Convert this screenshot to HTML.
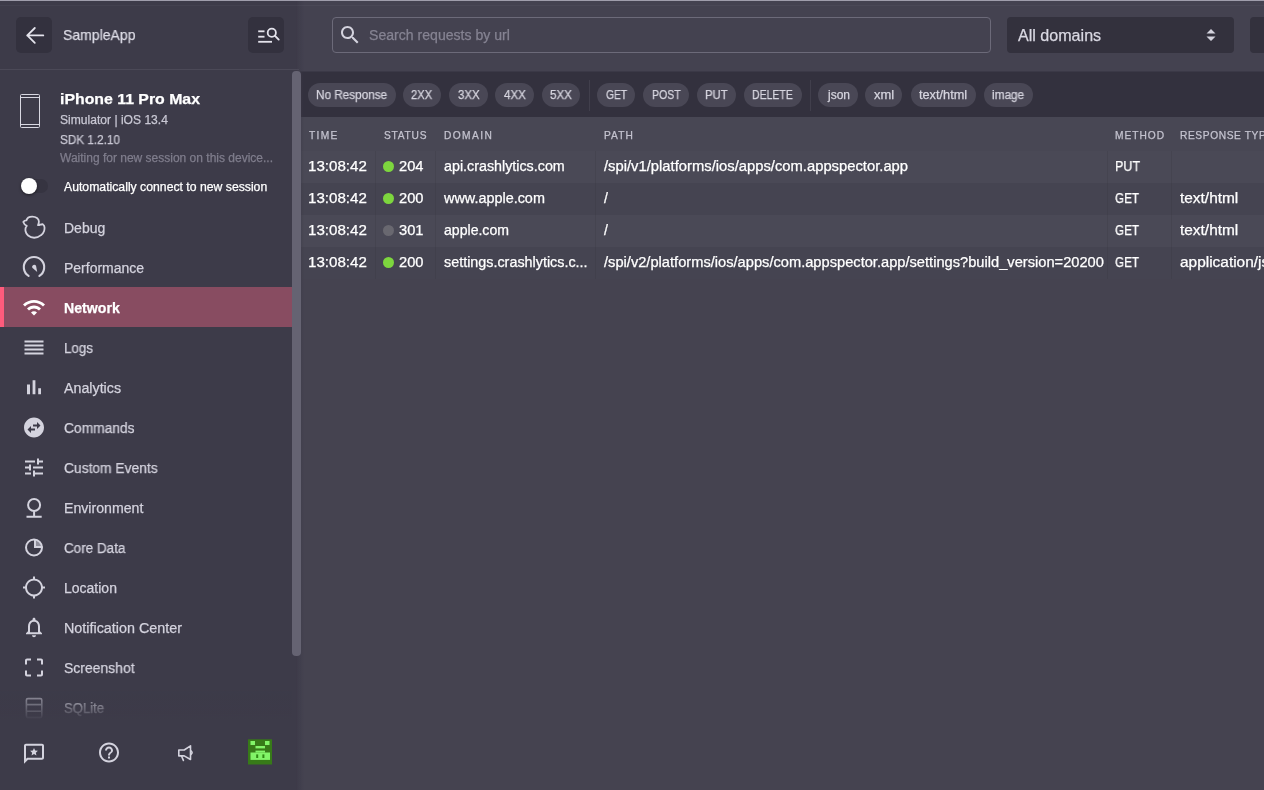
<!DOCTYPE html>
<html lang="en">
<head>
<meta charset="utf-8">
<title>AppSpector - Network</title>
<style>
html,body{margin:0;padding:0;}
body{width:1264px;height:790px;overflow:hidden;position:relative;background:#454350;font-family:"Liberation Sans",sans-serif;}
.a{position:absolute;}
.t{-webkit-text-stroke:0.25px currentColor;will-change:transform;position:absolute;white-space:pre;line-height:20px;height:20px;transform-origin:0 50%;}
svg{position:absolute;display:block;}
.ic{fill:#d4d3de;}
.chip{position:absolute;top:83px;height:24px;border-radius:12px;background:#494755;}
.row{position:absolute;left:301px;right:0;height:32px;}
.vb{position:absolute;top:151px;height:128px;width:1px;background:rgba(40,38,50,.13);}
</style>
</head>
<body>
<!-- main panel -->
<div class="a" id="mainhead" style="left:300px;top:0;width:964px;height:71px;background:#444250;"></div>
<div class="a" id="filterbar" style="left:300px;top:71px;width:964px;height:46px;background:#33313e;border-top:1px solid #3b3947;box-sizing:border-box;"></div>
<div class="a" id="thead" style="left:300px;top:117px;width:964px;height:34px;background:#484754;"></div>
<div class="row" style="top:151px;background:#4a4956;"></div>
<div class="row" style="top:183px;background:#454451;"></div>
<div class="row" style="top:215px;background:#4a4956;"></div>
<div class="row" style="top:247px;background:#454451;"></div>
<div class="vb" style="left:375px"></div><div class="vb" style="left:435px"></div><div class="vb" style="left:595px"></div><div class="vb" style="left:1107px"></div><div class="vb" style="left:1171px"></div>

<!-- search input -->
<div class="a" style="left:332px;top:17px;width:657px;height:34px;border:1px solid #6c6a79;border-radius:4px;"></div>
<svg class="ic" style="left:338px;top:23px" width="24" height="24" viewBox="0 0 24 24"><path d="M15.5 14h-.79l-.28-.27C15.41 12.59 16 11.11 16 9.5 16 5.91 13.09 3 9.5 3S3 5.910 3 9.5 5.91 16 9.5 16c1.61 0 3.09-.59 4.23-1.57l.27.28v.79l5 4.99L20.49 19l-4.99-5zm-6 0C7.01 14 5 11.99 5 9.500S7.01 5 9.5 5 14 7.01 14 9.5 11.99 14 9.5 14z"/></svg>
<!-- select -->
<div class="a" style="left:1007px;top:17px;width:227px;height:36px;border-radius:4px;background:#33313d;"></div>
<svg style="left:1204px;top:27px" width="14" height="16" viewBox="0 0 14 16"><path d="M2.500 6.600 L7 2 L11.500 6.600Z M2.500 9.400 L7 14 L11.500 9.400Z" fill="#d4d3de"/></svg>
<div class="a" style="left:1250px;top:17px;width:40px;height:36px;border-radius:4px;background:#33313d;"></div>

<!-- chips -->
<div class="chip" style="left:308px;width:88px"></div>
<div class="chip" style="left:403px;width:38px"></div>
<div class="chip" style="left:449.3px;width:38.500px"></div>
<div class="chip" style="left:495.3px;width:38.700px"></div>
<div class="chip" style="left:541.8px;width:38.700px"></div>
<div class="a" style="left:589px;top:80px;width:1px;height:31px;background:#413f4c;"></div>
<div class="chip" style="left:597.2px;width:38px"></div>
<div class="chip" style="left:643.3px;width:45.700px"></div>
<div class="chip" style="left:696.5px;width:39.200px"></div>
<div class="chip" style="left:744px;width:57.700px"></div>
<div class="a" style="left:810px;top:80px;width:1px;height:31px;background:#413f4c;"></div>
<div class="chip" style="left:818.2px;width:39.600px"></div>
<div class="chip" style="left:865.4px;width:37.100px"></div>
<div class="chip" style="left:910.6px;width:65.400px"></div>
<div class="chip" style="left:984px;width:49px"></div>

<!-- status dots -->
<div class="a" style="left:383px;top:160.700px;width:11px;height:11px;border-radius:50%;background:#7dd63e;"></div>
<div class="a" style="left:383px;top:192.700px;width:11px;height:11px;border-radius:50%;background:#7dd63e;"></div>
<div class="a" style="left:383px;top:224.700px;width:11px;height:11px;border-radius:50%;background:#696870;"></div>
<div class="a" style="left:383px;top:256.700px;width:11px;height:11px;border-radius:50%;background:#7dd63e;"></div>

<!-- sidebar -->
<div class="a" id="sidebar" style="left:0;top:0;width:297px;height:790px;background:#3d3b49;"></div>
<div class="a" style="left:296px;top:0;width:8px;height:790px;background:linear-gradient(90deg,rgba(61,59,73,1),rgba(61,59,73,0));z-index:4;"></div>
<div class="a" style="left:0;top:69px;width:299px;height:1px;background:#4b4957;z-index:4;"></div>
<!-- scrollbar thumb -->
<div class="a" style="left:292px;top:71px;width:8.500px;height:585px;border-radius:4px 4px 4px 4px;background:#656372;z-index:5;"></div>
<!-- top highlight -->
<div class="a" style="left:0;top:0;width:1264px;height:1px;background:#9f9dab;z-index:6;"></div>
<div class="a" style="left:0;top:5px;width:1264px;height:1px;background:rgba(255,255,255,.035);z-index:6;"></div>

<!-- header buttons -->
<div class="a" style="left:16px;top:17px;width:36px;height:36px;border-radius:5px;background:#33313e;"></div>
<div class="a" style="left:248px;top:17px;width:36px;height:36px;border-radius:5px;background:#33313e;"></div>

<!-- device icon -->
<svg style="left:19px;top:93px" width="22" height="36" viewBox="0 0 22 36" fill="none" stroke="#d9d8e2" stroke-width="1"><rect x="1.500" y="1.500" width="19" height="33" rx="1"/><path d="M1.500 4.500h19M1.500 31.500h19"/></svg>

<!-- toggle -->
<div class="a" style="left:21px;top:179px;width:27px;height:14px;border-radius:7px;background:#363441;"></div>
<div class="a" style="left:21px;top:178px;width:16px;height:16px;border-radius:50%;background:#ffffff;box-shadow:0 1px 3px rgba(0,0,0,.5);"></div>

<!-- active nav -->
<div class="a" style="left:0;top:287px;width:292px;height:40px;background:#884c61;"></div>
<div class="a" style="left:0;top:287px;width:4px;height:40px;background:#ff5b7c;"></div>

<svg style="left:0;top:0;z-index:2" width="300" height="730" viewBox="0 0 300 730" fill="#d4d3de">
<!-- back arrow -->
<path d="M43.300 35.400H27.200M34.800 28L27.300 35.400l7.500 7.400" fill="none" stroke="#e4e3ec" stroke-width="1.800" stroke-linecap="round" stroke-linejoin="round"/>
<!-- list search -->
<g fill="#e4e3ec"><rect x="258.200" y="30.400" width="6.300" height="1.800"/><rect x="258.200" y="35.800" width="6.300" height="1.800"/><rect x="258.200" y="40.900" width="13.800" height="1.800"/></g>
<circle cx="271.800" cy="32.700" r="4.100" fill="none" stroke="#e4e3ec" stroke-width="1.800"/>
<path d="M274.800 35.700l3.900 3.900" fill="none" stroke="#e4e3ec" stroke-width="1.900" stroke-linecap="round"/>
<!-- duck -->
<path d="M23.300 222C24 220.700 25.200 220.300 26.500 220.300C27 218.100 29.400 216.600 32.300 216.600C36 216.600 38.900 218.800 38.900 221.600C38.900 222.900 38.600 224 38 225.100C38.800 225.200 39.600 225 40.300 224.700C41.200 224.500 42 224.400 42.700 224.200C43.800 224.900 44.500 226 44.500 227.300C44.600 228.500 44.500 229.800 44.100 231C43.500 232.800 42.400 234.200 41 235.200C39.200 236.800 36.800 237.750 34.200 237.750C31.800 237.750 29.700 236.900 28.100 235.500C26.700 234.300 25.800 232.700 25.500 231C25.300 230 25.400 229 25.600 228C25.800 227.200 26.200 226.500 26.800 225.900C25.300 225.400 24 224 23.300 222Z" fill="none" stroke="#d4d3de" stroke-width="1.800" stroke-linejoin="round"/>
<!-- performance gauge: arc with gap at bottom -->
<path d="M28.600 275.850A10.200 10.200 0 1 1 39.400 275.850" fill="none" stroke="#d4d3de" stroke-width="2.100" stroke-linecap="round"/>
<path d="M32.300 267.800a2.100 2.100 0 1 1 3.800-1.800l1.100 6.100z"/>
<!-- wifi -->
<g transform="translate(22,295.500)" fill="#ffffff"><path d="M1 9l2 2c4.970-4.970 13.030-4.970 18 0l2-2C16.930 2.930 7.080 2.930 1 9zm8 8l3 3 3-3c-1.650-1.660-4.340-1.660-6 0zm-4-4l2 2c2.760-2.760 7.240-2.760 10 0l2-2C15.140 9.140 8.870 9.140 5 13z"/></g>
<!-- logs -->
<g><rect x="24.500" y="340.500" width="19" height="2"/><rect x="24.500" y="344.500" width="19" height="2"/><rect x="24.500" y="348.500" width="19" height="2"/><rect x="24.500" y="352.500" width="19" height="2"/></g>
<!-- analytics -->
<g transform="translate(22,375.300)"><path d="M5 9.200h3V19H5zM10.600 5h2.800v14h-2.800zm5.600 8H19v6h-2.800z"/></g>
<!-- commands -->
<g transform="translate(22,415.500)"><path d="M22 12c0-5.520-4.480-10-10-10S2 6.480 2 12s4.480 10 10 10 10-4.480 10-10zm-7-5.500l3.500 3.500-3.500 3.500V11h-4V9h4V6.500zm-6 11L5.500 14 9 10.500V13h4v2H9v2.500z"/></g>
<!-- custom events (tune) -->
<g transform="translate(22,455.500)"><path d="M3 17v2h6v-2H3zM3 5v2h10V5H3zm10 16v-2h8v-2h-8v-2h-2v6h2zM7 9v2H3v2h4v2h2V9H7zm14 4v-2H11v2h10zm-6-4h2V7h4V5h-4V3h-2v6z"/></g>
<!-- environment -->
<circle cx="34.100" cy="505" r="6" fill="none" stroke="#d4d3de" stroke-width="2"/>
<path d="M34.100 511.500v5M26.500 516.700h15.200" fill="none" stroke="#d4d3de" stroke-width="2"/>
<!-- core data -->
<circle cx="34" cy="547.500" r="8" fill="none" stroke="#d4d3de" stroke-width="2"/>
<path d="M35 539.500v7.500h7.500" fill="none" stroke="#d4d3de" stroke-width="2"/>
<path d="M36 540.500a7 7 0 0 1 5.800 5.500H36z" fill="#d4d3de" opacity=".55"/>
<!-- location -->
<g transform="translate(22,575.600)"><path d="M20.940 11c-.46-4.170-3.770-7.480-7.940-7.940V1h-2v2.060C6.830 3.520 3.520 6.830 3.060 11H1v2h2.060c.46 4.170 3.770 7.480 7.940 7.940V23h2v-2.060c4.170-.46 7.480-3.770 7.940-7.940H23v-2h-2.060zM12 19c-3.870 0-7-3.130-7-7s3.130-7 7-7 7 3.130 7 7-3.130 7-7 7z"/></g>
<!-- notification -->
<g transform="translate(22,615.300)"><path d="M12 22c1.100 0 2-.9 2-2h-4c0 1.100.9 2 2 2zm6-6v-5c0-3.070-1.630-5.640-4.500-6.320V4c0-.83-.67-1.500-1.500-1.500s-1.500.67-1.500 1.500v.68C7.640 5.360 6 7.920 6 11v5l-2 2v1h16v-1l-2-2zm-2 1H8v-6c0-2.480 1.510-4.500 4-4.500s4 2.020 4 4.500v6z"/></g>
<!-- screenshot -->
<g transform="translate(22,655.600)"><path d="M3 5v4h2V5h4V3H5c-1.100 0-2 .9-2 2zm2 10H3v4c0 1.100.9 2 2 2h4v-2H5v-4zm14 4h-4v2h4c1.100 0 2-.9 2-2v-4h-2v4zm0-16h-4v2h4v4h2V5c0-1.100-.9-2-2-2z"/></g>
<!-- sqlite -->
<g fill="none" stroke="#9f9eab" stroke-width="1.600"><rect x="26.400" y="698.600" width="15.400" height="19" rx="1.500"/><path d="M26.400 704.600h15.400M26.400 711.200h15.400"/></g>
</svg>


<div class="t" style="top:25.1px;font-size:15px;color:#dddce6;left:63.1px;transform:scaleX(0.935);">SampleApp</div>
<div class="t" style="top:89.3px;font-size:15.5px;color:#ffffff;left:60.0px;transform:scaleX(1.022);font-weight:700;">iPhone 11 Pro Max</div>
<div class="t" style="top:110.0px;font-size:12px;color:#c9c8d4;left:60.0px;transform:scaleX(1.007);">Simulator | iOS 13.4</div>
<div class="t" style="top:129.5px;font-size:12px;color:#c9c8d4;left:60.0px;transform:scaleX(0.976);">SDK 1.2.10</div>
<div class="t" style="top:147.6px;font-size:12px;color:#7f7d8c;left:60.0px;">Waiting for new session on this device...</div>
<div class="t" style="top:176.8px;font-size:12px;color:#ffffff;left:64.0px;transform:scaleX(1.019);">Automatically connect to new session</div>
<div class="t" style="top:217.5px;font-size:14px;color:#d4d3de;left:64.0px;transform:scaleX(0.990);z-index:2;">Debug</div>
<div class="t" style="top:257.5px;font-size:14px;color:#d4d3de;left:64.0px;z-index:2;">Performance</div>
<div class="t" style="top:297.5px;font-size:14px;color:#ffffff;left:64.0px;transform:scaleX(1.009);font-weight:700;z-index:2;">Network</div>
<div class="t" style="top:337.5px;font-size:14px;color:#d4d3de;left:64.0px;transform:scaleX(0.957);z-index:2;">Logs</div>
<div class="t" style="top:377.5px;font-size:14px;color:#d4d3de;left:64.0px;transform:scaleX(1.018);z-index:2;">Analytics</div>
<div class="t" style="top:417.5px;font-size:14px;color:#d4d3de;left:64.0px;transform:scaleX(0.986);z-index:2;">Commands</div>
<div class="t" style="top:457.5px;font-size:14px;color:#d4d3de;left:64.0px;transform:scaleX(0.986);z-index:2;">Custom Events</div>
<div class="t" style="top:497.5px;font-size:14px;color:#d4d3de;left:64.0px;transform:scaleX(1.010);z-index:2;">Environment</div>
<div class="t" style="top:537.5px;font-size:14px;color:#d4d3de;left:64.0px;transform:scaleX(0.962);z-index:2;">Core Data</div>
<div class="t" style="top:577.5px;font-size:14px;color:#d4d3de;left:64.0px;z-index:2;">Location</div>
<div class="t" style="top:617.5px;font-size:14px;color:#d4d3de;left:64.0px;transform:scaleX(1.024);z-index:2;">Notification Center</div>
<div class="t" style="top:657.5px;font-size:14px;color:#d4d3de;left:64.0px;transform:scaleX(0.996);z-index:2;">Screenshot</div>
<div class="t" style="top:697.5px;font-size:14px;color:#d4d3de;left:64.0px;transform:scaleX(0.937);z-index:2;">SQLite</div>
<div class="t" style="top:25.2px;font-size:14px;color:#858392;left:368.8px;transform:scaleX(1.006);">Search requests by url</div>
<div class="t" style="top:25.9px;font-size:16px;color:#d9d8e2;left:1018.0px;transform:scaleX(1.005);">All domains</div>
<div class="t" style="top:85.1px;font-size:12px;color:#d6d5df;left:316.3px;transform:scaleX(0.978);">No Response</div>
<div class="t" style="top:85.1px;font-size:12px;color:#d6d5df;left:411.3px;transform:scaleX(0.930);">2XX</div>
<div class="t" style="top:85.1px;font-size:12px;color:#d6d5df;left:457.6px;transform:scaleX(0.952);">3XX</div>
<div class="t" style="top:85.1px;font-size:12px;color:#d6d5df;left:503.6px;transform:scaleX(0.961);">4XX</div>
<div class="t" style="top:85.1px;font-size:12px;color:#d6d5df;left:550.1px;transform:scaleX(0.961);">5XX</div>
<div class="t" style="top:85.1px;font-size:12px;color:#d6d5df;left:605.5px;transform:scaleX(0.856);">GET</div>
<div class="t" style="top:85.1px;font-size:12px;color:#d6d5df;left:651.6px;transform:scaleX(0.882);">POST</div>
<div class="t" style="top:85.1px;font-size:12px;color:#d6d5df;left:704.8px;transform:scaleX(0.942);">PUT</div>
<div class="t" style="top:85.1px;font-size:12px;color:#d6d5df;left:752.3px;transform:scaleX(0.874);">DELETE</div>
<div class="t" style="top:85.1px;font-size:12px;color:#d6d5df;left:827.5px;">json</div>
<div class="t" style="top:85.1px;font-size:12px;color:#d6d5df;left:873.7px;transform:scaleX(1.079);">xml</div>
<div class="t" style="top:85.1px;font-size:12px;color:#d6d5df;left:918.9px;transform:scaleX(1.061);">text/html</div>
<div class="t" style="top:85.1px;font-size:12px;color:#d6d5df;left:992.3px;transform:scaleX(0.982);">image</div>
<div class="t" style="top:125.5px;font-size:10.2px;color:#c4c3cf;left:308.6px;letter-spacing:1.30px;">TIME</div>
<div class="t" style="top:125.5px;font-size:10.2px;color:#c4c3cf;left:383.5px;letter-spacing:0.76px;">STATUS</div>
<div class="t" style="top:125.5px;font-size:10.2px;color:#c4c3cf;left:443.5px;letter-spacing:1.42px;">DOMAIN</div>
<div class="t" style="top:125.5px;font-size:10.2px;color:#c4c3cf;left:603.5px;letter-spacing:1.07px;">PATH</div>
<div class="t" style="top:125.5px;font-size:10.2px;color:#c4c3cf;left:1114.6px;letter-spacing:1.00px;">METHOD</div>
<div class="t" style="top:125.5px;font-size:10.2px;color:#c4c3cf;left:1179.5px;letter-spacing:0.61px;">RESPONSE TYPE</div>
<div class="t" style="top:156.1px;font-size:14px;color:#ffffff;left:308.1px;transform:scaleX(1.081);">13:08:42</div>
<div class="t" style="top:156.1px;font-size:14px;color:#ffffff;left:399.2px;transform:scaleX(1.048);">204</div>
<div class="t" style="top:156.1px;font-size:14px;color:#ffffff;left:443.5px;transform:scaleX(1.021);">api.crashlytics.com</div>
<div class="t" style="top:156.1px;font-size:14px;color:#ffffff;left:603.5px;transform:scaleX(1.056);">/spi/v1/platforms/ios/apps/com.appspector.app</div>
<div class="t" style="top:156.1px;font-size:14px;color:#ffffff;left:1114.6px;transform:scaleX(0.896);">PUT</div>
<div class="t" style="top:188.1px;font-size:14px;color:#ffffff;left:308.1px;transform:scaleX(1.081);">13:08:42</div>
<div class="t" style="top:188.1px;font-size:14px;color:#ffffff;left:399.2px;transform:scaleX(1.048);">200</div>
<div class="t" style="top:188.1px;font-size:14px;color:#ffffff;left:443.5px;transform:scaleX(1.029);">www.apple.com</div>
<div class="t" style="top:188.1px;font-size:14px;color:#ffffff;left:603.5px;">/</div>
<div class="t" style="top:188.1px;font-size:14px;color:#ffffff;left:1114.6px;transform:scaleX(0.834);">GET</div>
<div class="t" style="top:188.1px;font-size:14px;color:#ffffff;left:1179.5px;transform:scaleX(1.102);">text/html</div>
<div class="t" style="top:220.1px;font-size:14px;color:#ffffff;left:308.1px;transform:scaleX(1.081);">13:08:42</div>
<div class="t" style="top:220.1px;font-size:14px;color:#ffffff;left:399.2px;transform:scaleX(1.048);">301</div>
<div class="t" style="top:220.1px;font-size:14px;color:#ffffff;left:443.5px;transform:scaleX(1.006);">apple.com</div>
<div class="t" style="top:220.1px;font-size:14px;color:#ffffff;left:603.5px;">/</div>
<div class="t" style="top:220.1px;font-size:14px;color:#ffffff;left:1114.6px;transform:scaleX(0.834);">GET</div>
<div class="t" style="top:220.1px;font-size:14px;color:#ffffff;left:1179.5px;transform:scaleX(1.102);">text/html</div>
<div class="t" style="top:252.1px;font-size:14px;color:#ffffff;left:308.1px;transform:scaleX(1.081);">13:08:42</div>
<div class="t" style="top:252.1px;font-size:14px;color:#ffffff;left:399.2px;transform:scaleX(1.048);">200</div>
<div class="t" style="top:252.1px;font-size:14px;color:#ffffff;left:443.5px;transform:scaleX(1.025);">settings.crashlytics.c...</div>
<div class="t" style="top:252.1px;font-size:14px;color:#ffffff;left:603.5px;transform:scaleX(1.047);">/spi/v2/platforms/ios/apps/com.appspector.app/settings?build_version=20200</div>
<div class="t" style="top:252.1px;font-size:14px;color:#ffffff;left:1114.6px;transform:scaleX(0.834);">GET</div>
<div class="t" style="top:252.1px;font-size:14px;color:#ffffff;left:1179.5px;transform:scaleX(1.102);">application/json</div>

<!-- fade over bottom of nav list -->
<div class="a" style="left:0;top:690px;width:292px;height:30px;background:linear-gradient(180deg,rgba(61,59,73,0),rgba(61,59,73,1));z-index:3;"></div>
<div class="a" style="left:0;top:720px;width:297px;height:70px;background:#3d3b49;z-index:3;"></div>
<svg style="left:0;top:730px;z-index:4" width="300" height="60" viewBox="0 730 300 60" fill="#d4d3de">
<!-- feedback bubble with star -->
<g transform="translate(22,741.700)"><path d="M20 2H4c-1.100 0-2 .9-2 2v18l4-4h14c1.100 0 2-.9 2-2V4c0-1.100-.9-2-2-2zm0 14H5.170L4 17.170V4h16v12z"/><path d="M12 6.300l1.150 2.550 2.750.28-2.050 1.870.6 2.700L12 12.300l-2.450 1.400.6-2.700L8.100 9.130l2.750-.28z"/></g>
<!-- help -->
<g transform="translate(97,740.600)"><path d="M11 18h2v-2h-2v2zm1-16C6.480 2 2 6.480 2 12s4.480 10 10 10 10-4.480 10-10S17.520 2 12 2zm0 18c-4.410 0-8-3.590-8-8s3.590-8 8-8 8 3.590 8 8-3.590 8-8 8zm0-14c-2.210 0-4 1.790-4 4h2c0-1.100.9-2 2-2s2 .9 2 2c0 2-3 1.750-3 5h2c0-2.250 3-2.500 3-5 0-2.210-1.790-4-4-4z"/></g>
<!-- megaphone -->
<g fill="none" stroke="#d4d3de" stroke-width="1.600" stroke-linejoin="round" stroke-linecap="round"><path d="M178.800 750h5.400l6.300-4.200v13.700l-6.300-3.600h-5.400z"/><path d="M181.600 756.200l1.800 4.200"/><path d="M191 750.900q2.200 1.700 0 3.400"/></g>
<!-- avatar -->
<rect x="248" y="739.300" width="24" height="25.200" fill="#377a18"/>
<g fill="#82f468"><rect x="250.500" y="741" width="4.500" height="4"/><rect x="265" y="741" width="4.500" height="4"/><rect x="255.500" y="746" width="9.500" height="2.400"/><rect x="255.500" y="750.600" width="9.500" height="2"/><rect x="250.500" y="752.500" width="19.500" height="7.400"/></g>
<g fill="#2f8a14"><rect x="256.200" y="754.400" width="2" height="3.600"/><rect x="262.400" y="754.400" width="2" height="3.600"/></g>
</svg>

</body>
</html>
